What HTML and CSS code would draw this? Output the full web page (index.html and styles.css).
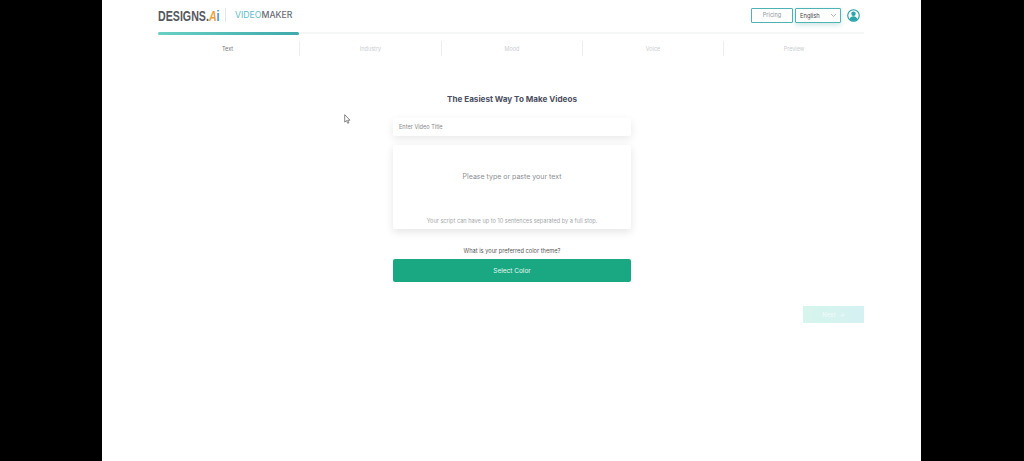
FILE: index.html
```html
<!DOCTYPE html>
<html lang="en">
<head>
    <meta charset="UTF-8">
    <meta name="viewport" content="width=device-width, initial-scale=1.0">
    <title>Designs.ai Videomaker</title>
    <link rel="stylesheet" href="styles.css">
</head>
<body>
    <div class="page">
        <div class="container">

            <!-- Header -->
            <header class="header">
                <div class="brand">
                    <div class="logo-box">
                        <span class="logo">DESIGNS.<span class="logo-a">A</span><span class="logo-i">i</span></span>
                    </div>
                    <span class="brand-line"></span>
                    <span class="product"><span class="product-video">VIDEO</span>MAKER</span>
                </div>
                <div class="header-right">
                    <a class="pricing">Pricing</a>
                    <div class="language">
                        <span>English</span>
                        <svg class="chevron" width="7" height="5" viewBox="0 0 7 5"><path d="M1 1l2.5 2.5L6 1" fill="none" stroke="#9aa5a8" stroke-width="0.8"/></svg>
                    </div>
                    <svg class="avatar" width="13" height="13" viewBox="0 0 14 14">
                        <circle cx="7" cy="7" r="6.2" fill="#fff" stroke="#1f9fa6" stroke-width="1.2"/>
                        <circle cx="7" cy="5.2" r="2.4" fill="#2aa5ab"/>
                        <path d="M2.7 11.2c.6-2.4 2.3-3.4 4.3-3.4s3.7 1 4.3 3.4A6 6 0 0 1 7 13a6 6 0 0 1-4.3-1.8z" fill="#2aa5ab"/>
                    </svg>
                </div>
            </header>

            <!-- Steps -->
            <div class="progress"><div class="progress-bar"></div></div>
            <nav class="steps">
                <div class="step step-active">Text</div>
                <div class="step">Industry</div>
                <div class="step">Mood</div>
                <div class="step">Voice</div>
                <div class="step">Preview</div>
            </nav>

            <!-- Form -->
            <main class="form">
                <h1>The Easiest Way To Make Videos</h1>
                <div class="title-input">Enter Video Title</div>
                <div class="script-box">
                    <p class="script-placeholder">Please type or paste your text</p>
                    <p class="script-hint">Your script can have up to 10 sentences separated by a full stop.</p>
                </div>
                <p class="color-label">What is your preferred color theme?</p>
                <button class="color-button">Select Color</button>
            </main>

            <div class="actions">
                <button class="next">Next <span class="next-arrow">→</span></button>
            </div>
        </div>

        <!-- Mouse pointer from the recording -->
        <svg class="pointer" width="7" height="10" viewBox="0 0 7 10"><path d="M.7.7v7.4l1.8-1.5 1.2 2.7 1.2-.5-1.2-2.6h2.3z" fill="#fff" stroke="#555" stroke-width="0.7"/></svg>
    </div>
</body>
</html>
```

FILE: styles.css
```css
body {
    margin: 0;
    height: 461px;
    overflow: hidden;
    background: #000;
    font-family: 'Inter', 'Open Sans', sans-serif;
    color: #3f4450;
}

.page {
    position: relative;
    width: 819px;
    height: 461px;
    margin-left: 102px;
    background: #fff;
}

.container {
    width: 706px;
    margin-left: 56px;
}

.header {
    box-sizing: border-box;
    display: flex;
    justify-content: space-between;
    align-items: center;
    height: 32px;
    padding-bottom: 2px;
}

.brand {
    display: flex;
    align-items: center;
}

.logo-box {
    width: 59px;
}

.logo {
    display: inline-block;
    font-family: 'Liberation Sans', sans-serif;
    font-weight: 700;
    font-size: 15px;
    white-space: nowrap;
    color: #55585f;
    transform: scaleX(0.71);
    transform-origin: left center;
}

.logo-a {
    color: #e9a23b;
    font-style: italic;
}

.logo-i {
    color: #3d8fc9;
}

.brand-line {
    width: 1px;
    height: 14px;
    margin: 0 9px 0 8px;
    background: #e2e5e7;
}

.product {
    font-size: 8.7px;
    font-weight: 500;
    color: #6a6d74;
}

.product-video {
    color: #5dbcc8;
    font-weight: 400;
}

.header-right {
    display: flex;
    align-items: center;
}

.pricing {
    box-sizing: border-box;
    width: 42px;
    height: 15px;
    line-height: 13px;
    text-align: center;
    font-size: 5.6px;
    color: #8b9699;
    border: 1px solid #4fb3b3;
    border-radius: 1px;
}

.language {
    box-sizing: border-box;
    display: flex;
    justify-content: space-between;
    align-items: center;
    width: 46px;
    height: 15px;
    margin-left: 2px;
    padding: 0 3px 0 4px;
    font-size: 5.8px;
    color: #444;
    border: 1px solid #4fb3b3;
    border-radius: 1px;
    box-shadow: 0 2px 5px rgba(60, 150, 150, 0.25);
}

.avatar {
    margin-left: 6px;
    margin-right: 4px;
}

.progress {
    height: 2px;
    background: #f5f6f6;
}

.progress-bar {
    width: 141px;
    height: 3px;
    border-radius: 2px;
    background: linear-gradient(to right, #69d0c3, #3fa9ac);
}

.steps {
    display: grid;
    grid-template-columns: 141px 142px 141px 141px 141px;
    height: 22px;
}

.step {
    display: flex;
    justify-content: center;
    align-items: center;
    margin-top: 7px;
    height: 15px;
    font-size: 5.5px;
    color: #c9cdd0;
    border-left: 1px solid #eceeee;
}

.step-active {
    padding-right: 2px;
    color: #777;
    border-left: none;
}

.form {
    display: flex;
    flex-direction: column;
    width: 238px;
    margin-left: 235px;
}

h1 {
    margin: 35px 0 0;
    height: 16px;
    line-height: 16px;
    font-size: 8.1px;
    font-weight: 700;
    text-align: center;
    white-space: nowrap;
    color: #4a4e5e;
}

.title-input {
    box-sizing: border-box;
    height: 18px;
    margin-top: 11px;
    padding-left: 6px;
    line-height: 18px;
    font-size: 5.6px;
    color: #888;
    background: #fff;
    border-radius: 2px;
    box-shadow: 0 3px 9px rgba(0, 0, 0, 0.09);
}

.script-box {
    display: flex;
    flex-direction: column;
    align-items: center;
    box-sizing: border-box;
    height: 84px;
    margin-top: 9px;
    background: #fff;
    border-radius: 2px;
    box-shadow: 0 3px 9px rgba(0, 0, 0, 0.11);
}

.script-placeholder {
    margin: 27px 0 0;
    height: 10px;
    line-height: 10px;
    font-size: 7px;
    color: #8a8d92;
}

.script-hint {
    margin: 35px 0 0;
    height: 8px;
    line-height: 8px;
    font-size: 5.6px;
    white-space: nowrap;
    color: #a5a8ac;
}

.color-label {
    margin: 18px 0 0;
    height: 8px;
    line-height: 8px;
    font-size: 5.7px;
    text-align: center;
    color: #555;
}

.color-button {
    height: 23px;
    margin-top: 4px;
    padding: 0;
    font-family: inherit;
    font-size: 6.5px;
    color: #e8f8f2;
    background: #1aa883;
    border: none;
    border-radius: 2px;
}

.actions {
    display: flex;
    justify-content: flex-end;
    margin-top: 24px;
}

.next {
    width: 61px;
    height: 17px;
    padding: 0;
    font-family: inherit;
    font-size: 6px;
    color: #f2fbfa;
    background: linear-gradient(to right, #d6f5ec, #d5f1f3);
    border: none;
}

.next-arrow {
    margin-left: 2px;
}

.pointer {
    position: absolute;
    left: 242px;
    top: 114px;
}
```
